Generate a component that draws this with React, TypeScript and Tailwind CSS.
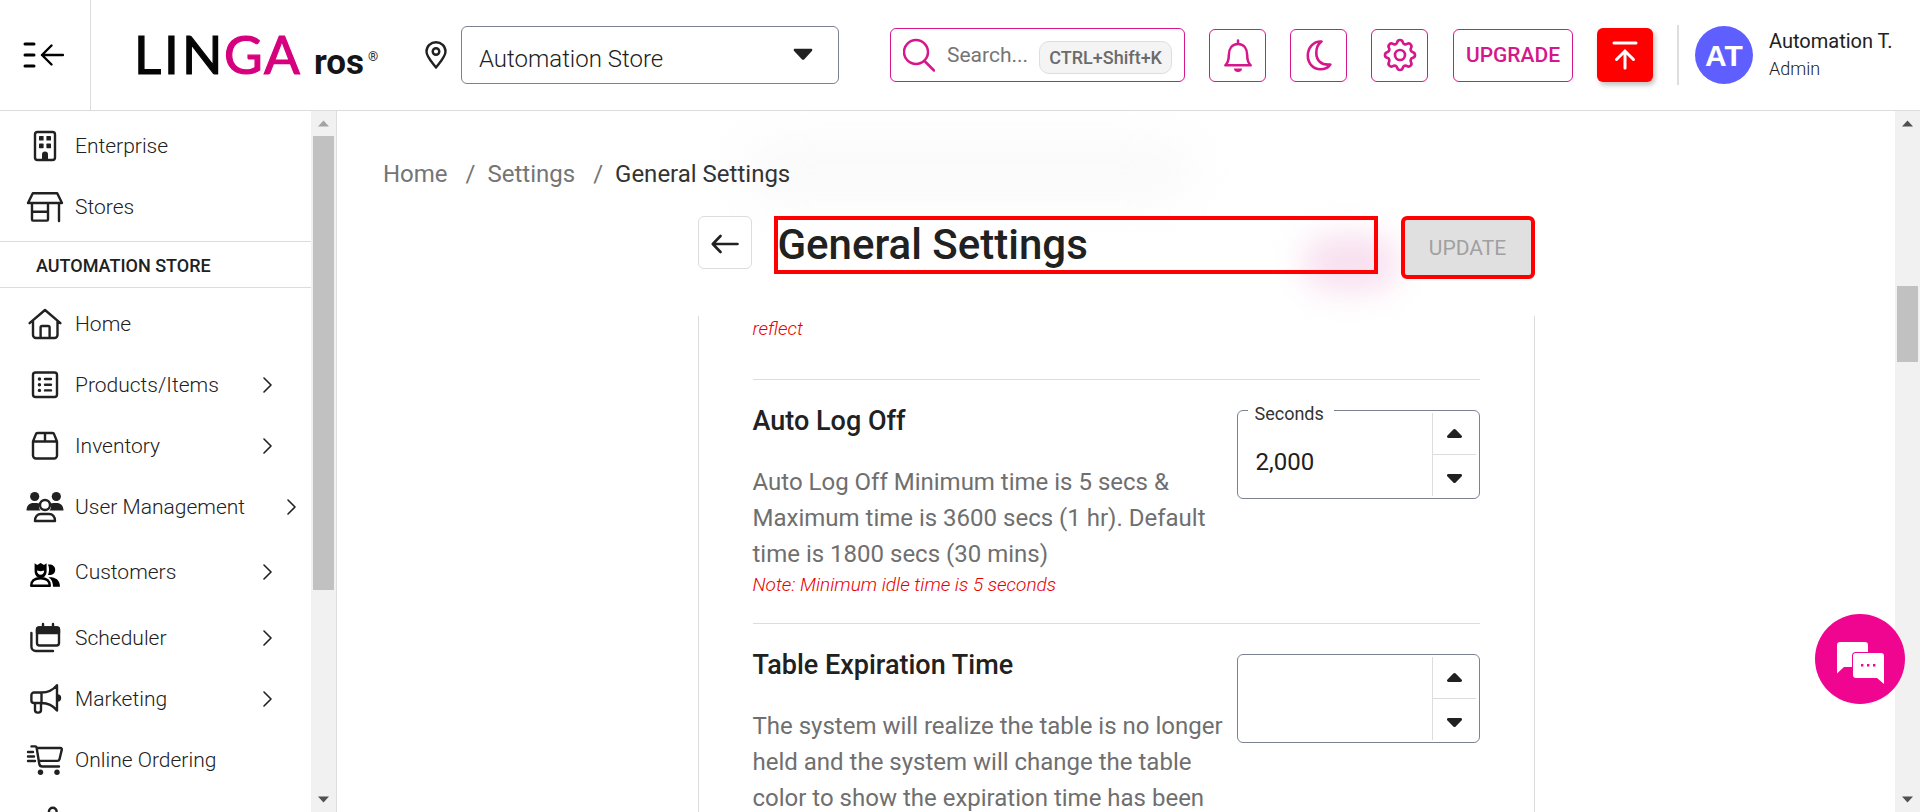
import { useState, type ReactNode } from "react";
import clsx from "clsx";

type NavEntry = {
  label: string;
  icon: ReactNode;
  expandable?: boolean;
  wide?: boolean;
  tall?: boolean;
};

function NavIcon({ children }: { children: ReactNode }) {
  return (
    <svg
      viewBox="0 0 38 38"
      className="size-[38px] shrink-0"
      fill="none"
      stroke="#212121"
      strokeWidth="2.4"
      strokeLinecap="round"
      strokeLinejoin="round"
      aria-hidden="true"
    >
      {children}
    </svg>
  );
}

const enterpriseIcon = (
  <NavIcon>
    <rect x="9" y="5" width="20" height="28" rx="2.5" />
    <g fill="#212121" stroke="none">
      <rect x="13" y="9" width="4.6" height="4.6" rx=".6" />
      <rect x="20.4" y="9" width="4.6" height="4.6" rx=".6" />
      <rect x="13" y="16.6" width="4.6" height="4.6" rx=".6" />
      <rect x="20.4" y="16.6" width="4.6" height="4.6" rx=".6" />
      <path d="M16 33v-5.5a3 3 0 0 1 6 0V33z" />
    </g>
  </NavIcon>
);

const storesIcon = (
  <NavIcon>
    <path d="M6.8 5.2h24.4L36 15H2zM6 15v16.6a1 1 0 0 0 1 1h14a1 1 0 0 0 1-1V15M6 23.8h16M33 15v18" />
  </NavIcon>
);

const homeIcon = (
  <NavIcon>
    <path d="M3.6 18.2 19 5l15.4 13.2M7 16v14a3 3 0 0 0 3 3h18.5a3 3 0 0 0 3-3V16M14.6 33V22.6a1.6 1.6 0 0 1 1.6-1.6h5.8a1.6 1.6 0 0 1 1.6 1.6V33" />
  </NavIcon>
);

const productsIcon = (
  <NavIcon>
    <rect x="7" y="6.5" width="24" height="24.5" rx="2.5" />
    <path d="M19 13h6M19 18.7h6M19 24.4h6" />
    <path d="M13.4 13h.1M13.4 18.7h.1M13.4 24.4h.1" strokeWidth="3.4" />
  </NavIcon>
);

const inventoryIcon = (
  <NavIcon>
    <path d="M7 14.5 9.8 7.4A2 2 0 0 1 11.6 6h14.8a2 2 0 0 1 1.8 1.4L31 14.5V28.5a3 3 0 0 1-3 3H10a3 3 0 0 1-3-3zM7 14.5h24M19 6v8.5" />
  </NavIcon>
);

const usersIcon = (
  <NavIcon>
    <g fill="#212121" stroke="none">
      <circle cx="8.7" cy="8.5" r="4.6" />
      <circle cx="30.3" cy="8.5" r="4.6" />
      <path d="M.5 22.6c0-4.8 2.8-7.6 7-7.6h3.3c.9 0 1.7.2 2.5.5-.8 2.6-.4 5.3 1.2 7.1zM37.5 22.6c0-4.8-2.8-7.6-7-7.6h-3.3c-.9 0-1.7.2-2.5.5.8 2.6.4 5.3-1.2 7.1z" />
    </g>
    <circle cx="19" cy="17" r="5" />
    <path d="M9 33c0-4.3 2.5-7 6-7h8c3.5 0 6 2.7 6 7z" />
  </NavIcon>
);

const customersIcon = (
  <NavIcon>
    <g fill="#000" stroke="none">
      <path d="M8.6 10.2 11.2 12l3.4-2 3.4 2 2.6-1.8v8.5a6 6.3 0 0 1-12 0zM11 17.5c0 2.4 1.5 4.3 3.6 4.3s3.6-1.9 3.6-4.3l-3.6.8z" fillRule="evenodd" />
      <path d="M22 11.5c4-.6 7.2 1.4 7.2 5.2 0 3.7-3 5.7-7.2 5.2 1.4-3.5 1.4-7 0-10.4zM22.5 24.2c6-.4 11.5 1.8 11.5 9.6h-7c0-4-1.2-7.4-4.5-9.6z" />
    </g>
    <path stroke="#000" d="M5.2 32.8c0-5 3.8-7.5 9.3-7.5s9.3 2.5 9.3 7.5z" />
  </NavIcon>
);

const schedulerIcon = (
  <NavIcon>
    <rect x="11" y="8.5" width="22" height="18" rx="2.5" />
    <path d="M11 14V10.5a2 2 0 0 1 2-2h18a2 2 0 0 1 2 2V14z" fill="#212121" />
    <path d="M17 5v3M27 5v3M5.4 14v13.5a4.5 4.5 0 0 0 4.5 4.5H27" />
  </NavIcon>
);

const marketingIcon = (
  <NavIcon>
    <path d="M15.5 12.5H8a2.6 2.6 0 0 0-2.6 2.6v5.3A2.6 2.6 0 0 0 8 23h7.5zM15.5 12.5C22 12.5 27 10 31 5.2v25.3C27 25.5 22 23 15.5 23M9 23v7a2.6 2.6 0 0 0 2.6 2.6h.8a2.6 2.6 0 0 0 2.6-2.6v-7" />
    <path d="M31.5 15.5a2.5 2.5 0 0 1 0 5z" fill="#212121" />
  </NavIcon>
);

const cartIcon = (
  <NavIcon>
    <path d="M5.5 5.4h3.8a1.4 1.4 0 0 1 1.3 1.1l2.7 16.5a3 3 0 0 0 3 2.5H33M11 7h23.5a1.3 1.3 0 0 1 1.3 1.6l-2.3 9.6a2.2 2.2 0 0 1-2.1 1.7H13M2 11h5M2 15.5h6M2 20h7" />
    <circle cx="14.5" cy="31.3" r="2.7" fill="#212121" stroke="none" />
    <circle cx="31" cy="31.3" r="2.7" fill="#212121" stroke="none" />
  </NavIcon>
);

const partialIcon = (
  <NavIcon>
    <path d="M23 13V9.5a3.8 3.8 0 0 1 7.6 0V16M23 10c-2 2-5 3-8 4v14h15V16" />
  </NavIcon>
);

const topEntries: NavEntry[] = [
  { label: "Enterprise", icon: enterpriseIcon },
  { label: "Stores", icon: storesIcon },
];

const storeEntries: NavEntry[] = [
  { label: "Home", icon: homeIcon },
  { label: "Products/Items", icon: productsIcon, expandable: true },
  { label: "Inventory", icon: inventoryIcon, expandable: true },
  { label: "User Management", icon: usersIcon, expandable: true, wide: true },
  { label: "Customers", icon: customersIcon, expandable: true, tall: true },
  { label: "Scheduler", icon: schedulerIcon, expandable: true },
  { label: "Marketing", icon: marketingIcon, expandable: true },
  { label: "Online Ordering", icon: cartIcon },
  { label: "", icon: partialIcon },
];

function NavRow({ entry }: { entry: NavEntry }) {
  return (
    <li>
      <a
        href="#"
        className={clsx(
          "flex items-center gap-[11px] pl-[26px] text-[21px] font-light text-[#212121]",
          entry.tall ? "h-[70px]" : "h-[61px]",
          entry.wide ? "pr-[15px]" : "pr-[39px]",
        )}
      >
        {entry.icon}
        <span className="pt-0.5 whitespace-nowrap">{entry.label}</span>
        {entry.expandable && (
          <svg viewBox="0 0 9 16" className="ml-auto h-4 w-[9px] shrink-0" fill="none" stroke="#212121" strokeWidth="1.6" strokeLinecap="round" strokeLinejoin="round" aria-hidden="true">
            <path d="M1 1l7 7-7 7" />
          </svg>
        )}
      </a>
    </li>
  );
}

function ScrollBar({ offset, thumb, muted }: { offset: string; thumb: string; muted?: boolean }) {
  return (
    <div className="flex w-[25px] shrink-0 flex-col items-center bg-[#f1f1f1] px-0.5" aria-hidden="true">
      <svg viewBox="0 0 25 25" className="size-[25px] shrink-0" fill={muted ? "#a3a3a3" : "#505050"}>
        <path d="M12.5 9.5 18 15.5H7z" />
      </svg>
      <div className="flex w-full flex-1 flex-col">
        <div className={offset} />
        <div className={clsx("w-full bg-[#c1c1c1]", thumb)} />
      </div>
      <svg viewBox="0 0 25 25" className="size-[25px] shrink-0" fill="#505050">
        <path d="M12.5 15.5 18 9.5H7z" />
      </svg>
    </div>
  );
}

function Sidebar() {
  return (
    <aside className="flex w-[337px] shrink-0 border-r border-[#dcdcdc]">
      <nav className="min-w-0 flex-1 overflow-hidden">
        <ul className="py-1">
          {topEntries.map((entry) => (
            <NavRow key={entry.label} entry={entry} />
          ))}
        </ul>
        <h2 className="border-y border-[#dcdcdc] pt-0.5 pl-9 text-lg leading-[43px] font-medium text-[#212121]">AUTOMATION STORE</h2>
        <ul className="pt-[5px]">
          {storeEntries.map((entry) => (
            <NavRow key={entry.label} entry={entry} />
          ))}
        </ul>
      </nav>
      <ScrollBar offset="h-0" thumb="h-[454px]" muted />
    </aside>
  );
}

function Logo() {
  return (
    <a href="#" aria-label="LINGA ros home" className="ml-[34px] block shrink-0">
      <svg viewBox="0 -10 270 80" className="h-20 w-[270px]">
        <g fontFamily="Lato, sans-serif" fontSize="53" strokeWidth="1.2">
          <text x="9" y="49" fill="#050505" stroke="#050505">L</text>
          <text x="39" y="49" fill="#050505" stroke="#050505">I</text>
          <text x="57" y="49" fill="#050505" stroke="#050505">N</text>
          <text x="99" y="49" fill="#d6007f" stroke="#d6007f">G</text>
          <text x="139" y="49" fill="#d6007f" stroke="#d6007f">A</text>
        </g>
        <text x="189" y="49" fill="#151515" fontFamily="Roboto, sans-serif" fontWeight="700" fontSize="35">ros</text>
        <text x="243" y="36" fill="#222" fontFamily="Roboto, sans-serif" fontSize="13">®</text>
      </svg>
    </a>
  );
}

function Header() {
  const square = "flex h-[53px] w-[57px] items-center justify-center rounded-md border border-[#d6168b] text-[#d6168b]";
  return (
    <header className="flex h-[111px] shrink-0 items-center border-b border-[#dcdcdc]">
      <button aria-label="Collapse menu" className="flex h-full w-[91px] shrink-0 items-center justify-center border-r border-[#dcdcdc] pr-1">
        <svg viewBox="0 0 42 28" className="h-7 w-[42px]" fill="none" stroke="#000" strokeLinecap="round" strokeLinejoin="round">
          <path d="M3 3h9M3 14h9M3 25h9" strokeWidth="3" />
          <path d="M41 14H20M29.5 4.500 20 14l9.500 9.500" strokeWidth="2.4" />
        </svg>
      </button>
      <Logo />
      <div className="ml-auto flex shrink-0 items-center">
        <svg viewBox="0 0 22 28" className="mr-3.5 h-7 w-[22px]" fill="none" stroke="#212121" strokeWidth="2.4" strokeLinejoin="round" aria-hidden="true">
          <path d="M11 26.5C6 20 1.500 15.600 1.500 10.500a9.500 9.300 0 0 1 19 0c0 5.100-4.500 9.500-9.500 16z" />
          <circle cx="11" cy="10.5" r="3.3" />
        </svg>
        <div className="relative">
          <select aria-label="Store" className="h-[58px] w-[378px] appearance-none rounded-md border border-[#7b8290] bg-white pt-2 pl-[17px] text-2xl font-light text-[#212121]">
            <option>Automation Store</option>
          </select>
          <svg viewBox="0 0 20 12" className="pointer-events-none absolute top-[22px] right-[26px] h-3 w-5" fill="#212121">
            <path d="M2 .8h16c1.300 0 1.700 1.200.9 2.100l-7.300 8a2 2 0 0 1-3 0L1.100 2.900C.300 2 .700.800 2 .8z" />
          </svg>
        </div>
        <div className="ml-[51px] flex h-[54px] w-[295px] items-center rounded-md border border-[#d6168b] px-3">
          <svg viewBox="0 0 32 34" className="h-[34px] w-8 shrink-0" fill="none" stroke="#d6168b" strokeWidth="2.5" strokeLinecap="round">
            <circle cx="13" cy="14" r="12" />
            <path d="M21.5 23 31 32.500" />
          </svg>
          <input aria-label="Search" placeholder="Search..." className="ml-3 w-20 min-w-0 flex-1 pt-0.5 text-[21px] text-[#212121] outline-none placeholder:text-[#757575]" />
          <kbd className="mt-1 rounded-[10px] border border-[#dedede] bg-[#f4f4f4] px-[9px] font-[Roboto] text-lg leading-[31px] font-medium text-[#6b6b6b]">CTRL+Shift+K</kbd>
        </div>
        <button aria-label="Notifications" className={clsx(square, "ml-6")}>
          <svg viewBox="0 0 30 34" className="h-[34px] w-[30px]" fill="none" stroke="currentColor" strokeWidth="2.5" strokeLinejoin="round" strokeLinecap="round">
            <path d="M2.300 27.300c2.800-2.600 3.500-5.500 3.500-10 0-6.500 3.200-11.300 9.200-11.300s9.200 4.800 9.200 11.300c0 4.500.7 7.400 3.500 10zM15 2.500V6" />
            <path d="M11 30.5h8a4 3.400 0 0 1-8 0z" fill="currentColor" stroke="none" />
          </svg>
        </button>
        <button aria-label="Dark mode" className={clsx(square, "ml-6")}>
          <svg viewBox="0 0 26 32" className="h-8 w-[26px]" fill="none" stroke="currentColor" strokeWidth="2.6" strokeLinejoin="round">
            <path d="M15.500 2.500C7.500 2 1.800 8.500 1.800 16.500c0 8 5.500 13.800 12.500 13.800 4.400 0 8-1.700 10-4.800-9.500 1-14-4.500-14-11.500 0-4.800 1.700-9 5.200-11.500z" />
          </svg>
        </button>
        <button aria-label="Settings" className={clsx(square, "ml-6")}>
          <svg viewBox="0 0 24 24" className="size-[40px]" fill="none" stroke="currentColor" strokeWidth="1.6" strokeLinecap="round" strokeLinejoin="round">
            <path d="M10.325 4.317c.426-1.756 2.924-1.756 3.350 0a1.724 1.724 0 0 0 2.573 1.066c1.543-.940 3.310.826 2.370 2.370a1.724 1.724 0 0 0 1.065 2.572c1.756.426 1.756 2.924 0 3.350a1.724 1.724 0 0 0-1.066 2.573c.940 1.543-.826 3.310-2.370 2.370a1.724 1.724 0 0 0-2.572 1.065c-.426 1.756-2.924 1.756-3.350 0a1.724 1.724 0 0 0-2.573-1.066c-1.543.940-3.310-.826-2.370-2.370a1.724 1.724 0 0 0-1.065-2.572c-1.756-.426-1.756-2.924 0-3.350a1.724 1.724 0 0 0 1.066-2.573c-.940-1.543.826-3.310 2.370-2.370 1 .608 2.296.070 2.572-1.065z" />
            <circle cx="12" cy="12" r="3" />
          </svg>
        </button>
        <button className="ml-[25px] h-[53px] w-[120px] rounded-md border border-[#d6168b] pt-0.5 text-[21px] font-medium text-[#d6168b]">UPGRADE</button>
        <button aria-label="Upload" className="ml-6 flex h-[54px] w-14 items-center justify-center rounded-md bg-[#f00] shadow-[2px_3px_5px_rgba(0,0,0,0.25)]">
          <svg viewBox="0 0 26 30" className="h-[30px] w-[26px]" fill="none" stroke="#fff" strokeWidth="3" strokeLinecap="round">
            <path d="M2 3h22M13 28V12M4.500 19.500 13 11l8.500 8.500" />
          </svg>
        </button>
        <div className="ml-6 h-[60px] w-0.5 bg-[#dedede]" />
        <div className="ml-4 flex size-[58px] items-center justify-center rounded-full bg-[#5f5fff] font-['Liberation_Sans'] text-[30px] font-bold text-white">AT</div>
        <div className="ml-4 w-[151px] text-[#212121]">
          <p className="text-xl leading-7">Automation T.</p>
          <p className="text-lg leading-7 font-light">Admin</p>
        </div>
      </div>
    </header>
  );
}

function Stepper({ id, label, initial }: { id: string; label?: string; initial: number | null }) {
  const [value, setValue] = useState(initial);
  const step = (by: number) => setValue((current) => Math.max(0, (current ?? 0) + by));
  const arrow = "flex h-1/2 w-full items-center justify-center";
  return (
    <div className="relative flex h-[89px] w-[243px] shrink-0 rounded-md border border-[#7b8290]">
      {label && (
        <label htmlFor={id} className="absolute -top-2.5 left-2.5 bg-white pr-2.5 pl-[7px] text-lg leading-[26px] text-[#333]">
          {label}
        </label>
      )}
      <input
        id={id}
        aria-label={label ?? "Table expiration time"}
        inputMode="numeric"
        value={value === null ? "" : value.toLocaleString("en-US")}
        onChange={(event) => {
          const digits = event.target.value.replace(/\D/g, "");
          setValue(digits ? Number(digits) : null);
        }}
        className="min-w-0 flex-1 rounded-md pt-3.5 pl-[18px] text-2xl text-[#212121] outline-none"
      />
      <div className="my-0.5 mr-[3px] w-11 divide-y divide-[#dcdcdc] border-l border-[#dcdcdc]">
        <button aria-label="Increase" className={arrow} onClick={() => step(1)}>
          <svg viewBox="0 0 15 9" className="h-[9px] w-[15px]" fill="#212121">
            <path d="M7.500 0c.5 0 .8.2 1.200.6l5.800 5.800c1 1 .5 2.600-1 2.600h-12c-1.500 0-2-1.600-1-2.600L6.300.6c.4-.4.7-.6 1.200-.6z" />
          </svg>
        </button>
        <button aria-label="Decrease" className={clsx(arrow, "pt-1.5")} onClick={() => step(-1)}>
          <svg viewBox="0 0 15 9" className="h-[9px] w-[15px]" fill="#212121">
            <path d="M7.500 9c.5 0 .8-.2 1.200-.6l5.800-5.800c1-1 .5-2.600-1-2.600h-12C0 0-.5 1.600.5 2.600l5.800 5.800c.4.4.7.6 1.200.6z" />
          </svg>
        </button>
      </div>
    </div>
  );
}

const noteText = "text-[19px] leading-[26px] font-light text-[#e80000] italic";

function Setting({ title, note, description, children }: { title: string; note?: string; description: string; children: ReactNode }) {
  return (
    <section className="flex items-start border-t border-[#dcdcdc] pt-[30px] pb-[25px]">
      <div className="-mt-0.5 min-w-0 flex-1">
        <h3 className="mb-[30px] text-[27px] leading-[26px] font-medium text-[#212121]">{title}</h3>
        <p className="pr-3 text-2xl leading-9 text-[#6f6f6f]">{description}</p>
        {note && <p className={noteText}>{note}</p>}
      </div>
      {children}
    </section>
  );
}

function Main() {
  return (
    <main className="flex min-w-0 flex-1 flex-col overflow-hidden">
      <div className="relative isolate shrink-0">
        <div className="absolute top-8 left-[26%] -z-10 h-14 w-[29%] rounded-full bg-[#f9f9f9] blur-xl" />
        <div className="absolute top-[124px] left-[62%] -z-10 h-14 w-24 rounded-full bg-[#f8dfef] blur-lg" />
        <nav aria-label="Breadcrumb" className="px-[46px] pt-[45px]">
          <ol className="flex text-2xl leading-9 text-[#757575]">
            <li><a href="#">Home</a></li>
            <li className="before:mr-3 before:ml-[18px] before:content-['/']"><a href="#">Settings</a></li>
            <li className="text-[#333] before:mr-3 before:ml-[18px] before:text-[#757575] before:content-['/']" aria-current="page">General Settings</li>
          </ol>
        </nav>
        <div className="mx-auto flex h-[124px] max-w-[837px] items-start pt-6">
          <button aria-label="Back" className="flex h-[53px] w-[54px] shrink-0 items-center justify-center rounded-md border border-[#dcdcdc] bg-white/60 pt-0.5">
            <svg viewBox="0 0 28 20" className="h-5 w-7" fill="none" stroke="#212121" strokeWidth="2.6" strokeLinecap="round" strokeLinejoin="round">
              <path d="M26.500 10H2M9.500 2 1.800 10l7.700 8" />
            </svg>
          </button>
          <h1 className="ml-[22px] h-[58px] flex-1 border-4 border-[#f00] text-[42px] leading-[50px] font-medium text-[#212121]">General Settings</h1>
          <button disabled className="ml-[23px] h-[63px] w-[134px] shrink-0 rounded-md border-4 border-[#f00] bg-[#e0e0e0] pt-0.5 text-[21px] text-[#a0a0a0]">UPDATE</button>
        </div>
      </div>
      <div className="mx-auto min-h-0 w-full max-w-[837px] flex-1 overflow-hidden border-x border-[#dcdcdc] px-[54px]">
        <p className={clsx(noteText, "pb-[37px]")}>reflect</p>
        <Setting
          title="Auto Log Off"
          description="Auto Log Off Minimum time is 5 secs & Maximum time is 3600 secs (1 hr). Default time is 1800 secs (30 mins)"
          note="Note: Minimum idle time is 5 seconds"
        >
          <Stepper id="auto-log-off" label="Seconds" initial={2000} />
        </Setting>
        <Setting
          title="Table Expiration Time"
          description="The system will realize the table is no longer held and the system will change the table color to show the expiration time has been"
        >
          <Stepper id="table-expiration" initial={null} />
        </Setting>
      </div>
    </main>
  );
}

export default function App() {
  return (
    <div className="flex h-screen flex-col overflow-hidden bg-white font-[Roboto,sans-serif]">
      <Header />
      <div className="flex min-h-0 flex-1">
        <Sidebar />
        <Main />
        <ScrollBar offset="h-[150px]" thumb="h-[76px]" />
      </div>
      <button aria-label="Open chat" className="fixed right-[15px] bottom-[108px] size-[90px] rounded-full bg-[#f00591]">
        <svg viewBox="0 0 90 90" className="size-full">
          <path d="M25 28h25a3 3 0 0 1 3 3v22H29l-7 6.500V31a3 3 0 0 1 3-3z" fill="#fff" />
          <path d="M41 39h25a3 3 0 0 1 3 3v28l-7-6H41a3 3 0 0 1-3-3V42a3 3 0 0 1 3-3z" fill="#fff" stroke="#f00591" strokeWidth="2" paintOrder="stroke" />
          <path d="M46 50h2.400v2.400H46zM52 50h2.400v2.400H52zM58 50h2.400v2.400H58z" fill="#f00591" />
        </svg>
      </button>
    </div>
  );
}
